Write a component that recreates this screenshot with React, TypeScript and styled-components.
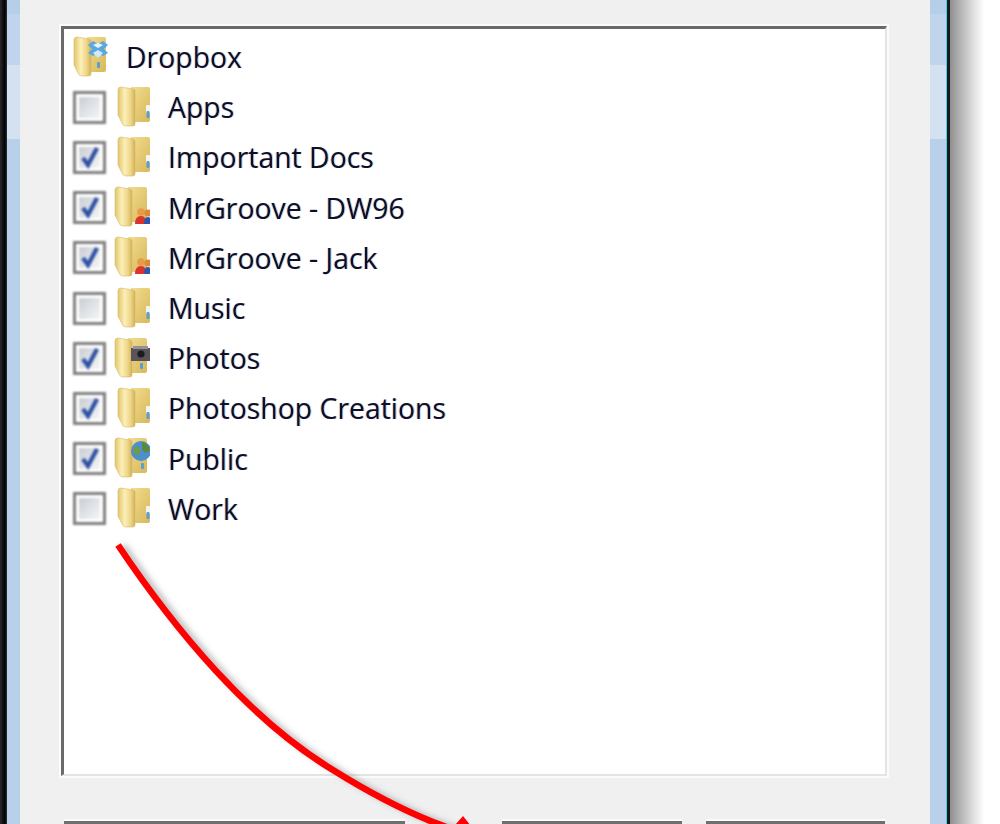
import React from 'react';
import styled, { createGlobalStyle } from 'styled-components';

type Badge = 'none' | 'dropbox' | 'people' | 'camera' | 'globe';

type FolderRow = {
  name: string;
  checked: boolean;
  badge: Badge;
  wide?: boolean;
};

const rows: FolderRow[] = [
  { name: 'Apps', checked: false, badge: 'none' },
  { name: 'Important Docs', checked: true, badge: 'none' },
  { name: 'MrGroove - DW96', checked: true, badge: 'people', wide: true },
  { name: 'MrGroove - Jack', checked: true, badge: 'people', wide: true },
  { name: 'Music', checked: false, badge: 'none' },
  { name: 'Photos', checked: true, badge: 'camera', wide: true },
  { name: 'Photoshop Creations', checked: true, badge: 'none' },
  { name: 'Public', checked: true, badge: 'globe', wide: true },
  { name: 'Work', checked: false, badge: 'none' },
];

const GlobalStyle = createGlobalStyle`
  html, body {
    margin: 0;
    padding: 0;
    background: #fff;
  }
`;

const Screen = styled.div`
  position: relative;
  display: flex;
  width: 1000px;
  height: 824px;
  overflow: hidden;
  background: #fff;
`;

const WindowEdge = styled.div`
  width: 7px;
  flex: none;
  background: linear-gradient(90deg, #2a2a2a, #000 70%, #30343a);
`;

const GlassRail = styled.div<{ $w: number }>`
  width: ${(p) => p.$w}px;
  flex: none;
  background: linear-gradient(
    180deg,
    #b5cfe9 0,
    #b5cfe9 14px,
    #c0d5ec 14px,
    #c0d5ec 65px,
    #d3e1f1 65px,
    #d3e1f1 139px,
    #b8d0ea 139px,
    #b8d0ea 100%
  );
`;

const Panel = styled.div`
  width: 910px;
  flex: none;
  box-sizing: border-box;
  padding: 26px 43px 0 41px;
  background: #f0f0f0;
`;

const ListBox = styled.div`
  box-sizing: border-box;
  width: 826px;
  height: 750px;
  padding: 3px 0 0 9px;
  background: #fff;
  border-style: solid;
  border-width: 3px 2px 2px 3px;
  border-color: #6a6a6a #e4e4e4 #e4e4e4 #6a6a6a;
  box-shadow: 0 0 0 2px #fbfbfb;
`;

const Row = styled.div`
  display: flex;
  align-items: center;
  height: 50.2px;
`;

const CheckBox = styled.div`
  position: relative;
  box-sizing: border-box;
  flex: none;
  width: 33px;
  height: 33px;
  margin-right: 11px;
  border: 3px solid #7f7f7f;
  background: #fff;
  filter: blur(0.8px);

  &::before {
    content: '';
    position: absolute;
    inset: 3px;
    background: linear-gradient(135deg, #c9ced4, #e6e8eb 65%, #f4f4f4);
  }

  svg {
    position: absolute;
    left: 1px;
    top: 0;
  }
`;

const Icon = styled.svg`
  flex: none;
  width: 36px;
  height: 42px;
  margin-bottom: 3px;
  filter: blur(0.7px);
`;

const RootIcon = styled(Icon)`
  margin-right: 17px;
`;

const RowIcon = styled(Icon)<{ $wide?: boolean }>`
  margin-left: ${(p) => (p.$wide ? -3 : 0)}px;
  margin-right: ${(p) => (p.$wide ? 18 : 15)}px;
`;

const Label = styled.span`
  font-family: 'Open Sans', 'Noto Sans', sans-serif;
  font-size: 28.4px;
  line-height: 36px;
  white-space: nowrap;
  color: #0e0e2a;
  filter: blur(0.5px);
  text-shadow: -1px 0 rgba(255, 120, 0, 0.35), 1px 0 rgba(0, 150, 255, 0.4);
`;

const Buttons = styled.div`
  display: flex;
  margin: 45px 0 0 3px;
`;

const DialogButton = styled.div<{ $w: number; $after: number }>`
  box-sizing: border-box;
  width: ${(p) => p.$w}px;
  height: 20px;
  margin-right: ${(p) => p.$after}px;
  border-top: 3px solid #6f6f6f;
  background: #e8e8e8;
  box-shadow: 0 -2px 0 #fbfbfb;
`;

const CyanLine = styled.div`
  width: 1px;
  flex: none;
  background: #35d4f4;
`;

const BlackLine = styled.div`
  width: 3px;
  flex: none;
  background: #181818;
`;

const DropShadow = styled.div`
  width: 34px;
  flex: none;
  background: linear-gradient(90deg, #8f8f8f, #b4b4b4 30%, #e2e2e2 72%, #fff);
`;

const ArrowLayer = styled.svg`
  position: absolute;
  left: 0;
  top: 0;
  pointer-events: none;
`;

const arrowPath = 'M118 545C175 630 250 720 333 770C365 790 398 808 433 822L470 836';

function FolderBadge({ badge }: { badge: Badge }) {
  if (badge === 'dropbox') {
    return (
      <g>
        <path d="M15 10l5-4 5 3 5-3 5 4-4 4 4 4-5 3-5-3-5 3-5-3 4-4z" fill="#5aa8e0" />
        <path d="M20 10l5 3 5-3-5-2z" fill="#e8f4fc" />
        <path d="M20 18l5-3 5 3-5 5z" fill="#d4e9f8" />
        <rect x="24" y="27" width="3" height="6" rx="1" fill="#5a9fd4" />
      </g>
    );
  }
  if (badge === 'people') {
    return (
      <g>
        <circle cx="27" cy="27" r="3.8" fill="#e89a4a" />
        <circle cx="34" cy="28" r="3.6" fill="#dd8a3c" />
        <path d="M21 39c0-5 2-8 6-8s5 3 5 8z" fill="#d8342c" />
        <path d="M30 39c0-4 1-7 4-7s3 3 3 7z" fill="#2f55b0" />
      </g>
    );
  }
  if (badge === 'camera') {
    return (
      <g>
        <rect x="17" y="12" width="20" height="13" fill="#5a545a" />
        <rect x="19" y="10" width="15" height="3" fill="#949294" />
        <circle cx="27" cy="18" r="3.6" fill="#1e1a1e" />
        <rect x="26" y="27" width="3" height="6" rx="1" fill="#5a9fd4" />
      </g>
    );
  }
  if (badge === 'globe') {
    return (
      <g>
        <circle cx="27" cy="15" r="10" fill="#4a8fd0" />
        <path d="M28 6c5 1 8 5 8 9l-5 2-3-4z" fill="#5c8a3c" />
        <path d="M19 12l5-2 3 5-3 5-4-3z" fill="#6f9a4a" />
        <rect x="27" y="27" width="3" height="6" rx="1" fill="#5a9fd4" />
      </g>
    );
  }
  return (
    <g>
      <rect x="29" y="20" width="4" height="8" rx="1" fill="#f4f4f4" />
      <rect x="29.5" y="26" width="3" height="7" rx="1" fill="#5a9fd4" />
    </g>
  );
}

function Folder({ badge }: { badge: Badge }) {
  return (
    <>
      <defs>
        <linearGradient id="folderBack" x1="0" x2="1" y1="0" y2="1">
          <stop offset="0" stopColor="#f2dd90" />
          <stop offset="1" stopColor="#d8b85a" />
        </linearGradient>
        <linearGradient id="folderFront" x1="0" x2="1" y1="0" y2="0">
          <stop offset="0" stopColor="#e2c56c" />
          <stop offset="0.4" stopColor="#fbf0b8" />
          <stop offset="0.75" stopColor="#eed486" />
          <stop offset="1" stopColor="#d2b25a" />
        </linearGradient>
      </defs>
      <path d="M14 2h17q2 0 2 2v31q0 2-2 2H14z" fill="url(#folderBack)" />
      <path
        d="M1 5q0-3 3-3l12 2q2 .5 2 2v33q0 2-2 2h-7q-3 0-4-3L1 30z"
        fill="url(#folderFront)"
        stroke="#d6b866"
        strokeWidth="0.6"
      />
      <FolderBadge badge={badge} />
    </>
  );
}

function Tick() {
  return (
    <svg width="26" height="26" viewBox="0 0 26 26">
      <path d="M6 14l5 7L20 4" fill="none" stroke="#2f50a4" strokeWidth="4.2" />
    </svg>
  );
}

export default function App(): JSX.Element {
  return (
    <Screen>
      <GlobalStyle />
      <WindowEdge />
      <GlassRail $w={13} />
      <Panel>
        <ListBox>
          <Row>
            <RootIcon viewBox="0 0 36 42">
              <Folder badge="dropbox" />
            </RootIcon>
            <Label>Dropbox</Label>
          </Row>
          {rows.map((row) => (
            <Row key={row.name}>
              <CheckBox>{row.checked && <Tick />}</CheckBox>
              <RowIcon viewBox="0 0 36 42" $wide={row.wide}>
                <Folder badge={row.badge} />
              </RowIcon>
              <Label>{row.name}</Label>
            </Row>
          ))}
        </ListBox>
        <Buttons>
          <DialogButton $w={341} $after={97} />
          <DialogButton $w={180} $after={24} />
          <DialogButton $w={179} $after={0} />
        </Buttons>
      </Panel>
      <GlassRail $w={16} />
      <CyanLine />
      <BlackLine />
      <DropShadow />
      <ArrowLayer width="1000" height="824" viewBox="0 0 1000 824">
        <defs>
          <filter id="arrowShadow" x="-10%" y="-10%" width="120%" height="120%">
            <feGaussianBlur stdDeviation="3" />
          </filter>
        </defs>
        <path
          d={arrowPath}
          fill="none"
          stroke="#777"
          strokeOpacity="0.55"
          strokeWidth="6"
          filter="url(#arrowShadow)"
          transform="translate(5 1)"
        />
        <path d={arrowPath} fill="none" stroke="#ff0000" strokeWidth="6.5" />
        <path d="M463 816L490 850L440 842z" fill="#ff0000" />
      </ArrowLayer>
    </Screen>
  );
}
